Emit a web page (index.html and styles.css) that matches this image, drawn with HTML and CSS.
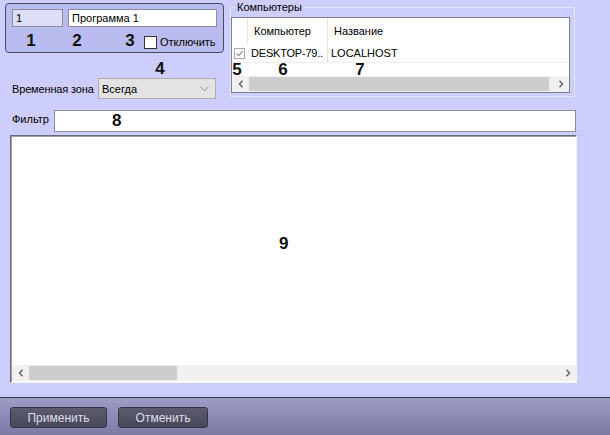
FILE: index.html
```html
<!DOCTYPE html>
<html lang="ru">
<head>
<meta charset="utf-8">
<title>Программа</title>
<link rel="stylesheet" href="styles.css">
</head>
<body>
<div class="app">
  <div class="top">
    <div class="leftcol">
      <div class="idbox">
        <div class="fields">
          <div class="field f-id">1</div>
          <div class="field f-name">Программа 1</div>
        </div>
        <div class="nums">
          <span class="num n1">1</span>
          <span class="num n2">2</span>
          <span class="num n3">3</span>
          <span class="chk"></span>
          <span class="chk-label">Отключить</span>
        </div>
      </div>
      <div class="num n4">4</div>
      <div class="zone">
        <span class="zone-label">Временная зона</span>
        <div class="combo">
          <span>Всегда</span>
          <svg class="combo-arrow" width="9" height="6" viewBox="0 0 9 6"><path d="M0.5 0.8 L4.5 4.8 L8.5 0.8" fill="none" stroke="#8a8a8a" stroke-width="1"/></svg>
        </div>
      </div>
    </div>
    <fieldset class="comps">
      <legend>Компьютеры</legend>
      <div class="lv">
        <div class="lv-head">
          <span class="c0"></span>
          <span class="c1">Компьютер</span>
          <span class="c2">Название</span>
        </div>
        <div class="lv-row">
          <span class="c0"><span class="lv-chk"><svg width="9" height="9" viewBox="0 0 9 9"><path d="M1.5 4.5 L3.7 6.7 L7.8 1.8" fill="none" stroke="#8c8c8c" stroke-width="1.2"/></svg></span></span>
          <span class="c1 cell">DESKTOP-79..</span>
          <span class="c2 cell">LOCALHOST</span>
        </div>
        <div class="lv-nums">
          <span class="num s5">5</span>
          <span class="num s6">6</span>
          <span class="num s7">7</span>
        </div>
        <div class="hscroll">
          <span class="arrow"><svg width="6" height="8" viewBox="0 0 6 8"><path d="M4.5 0.8 L1.5 4 L4.5 7.2" fill="none" stroke="#606060" stroke-width="1.4"/></svg></span>
          <span class="thumb thumb-small"></span>
          <span class="track"></span>
          <span class="arrow"><svg width="6" height="8" viewBox="0 0 6 8"><path d="M1.5 0.8 L4.5 4 L1.5 7.2" fill="none" stroke="#606060" stroke-width="1.4"/></svg></span>
        </div>
      </div>
    </fieldset>
  </div>

  <div class="filter">
    <span class="filter-label">Фильтр</span>
    <div class="filter-input"><span class="num n8">8</span></div>
  </div>

  <div class="biglist">
    <div class="area"><span class="num n9">9</span></div>
    <div class="hscroll big">
      <span class="arrow"><svg width="6" height="8" viewBox="0 0 6 8"><path d="M4.5 0.8 L1.5 4 L4.5 7.2" fill="none" stroke="#606060" stroke-width="1.4"/></svg></span>
      <span class="thumb thumb-big"></span>
      <span class="track"></span>
      <span class="arrow"><svg width="6" height="8" viewBox="0 0 6 8"><path d="M1.5 0.8 L4.5 4 L1.5 7.2" fill="none" stroke="#606060" stroke-width="1.4"/></svg></span>
    </div>
  </div>

  <div class="footer">
    <button class="btn btn-apply">Применить</button>
    <button class="btn btn-cancel">Отменить</button>
  </div>
</div>
</body>
</html>
```

FILE: styles.css
```css
* { box-sizing: border-box; }
html, body {
  margin: 0;
  padding: 0;
}
body {
  background: #cdcefc;
  font-family: "Liberation Sans", Arial, sans-serif;
  font-size: 11px;
  color: #000;
}
.app {
  width: 610px;
  height: 435px;
  display: flex;
  flex-direction: column;
  overflow: hidden;
}

.num {
  font-family: "Liberation Sans", Arial, sans-serif;
  font-weight: bold;
  font-size: 17px;
  line-height: 18px;
  color: #111;
}

/* top */
.top {
  display: flex;
  align-items: flex-start;
}
.leftcol {
  width: 219px;
  margin-left: 5px;
  margin-top: 3px;
}
.idbox {
  height: 50px;
  border: 1px solid #4a4a5a;
  border-radius: 4px;
  background: #babcef;
  padding: 5px 0 0 6px;
}
.fields {
  display: flex;
  gap: 5px;
}
.field {
  height: 18px;
  border: 1px solid #8c8ca0;
  line-height: 16px;
  padding-left: 3px;
  font-size: 11px;
}
.f-id {
  width: 51px;
  background: #dedef8;
}
.f-name {
  width: 149px;
  background: #fff;
}
.nums {
  display: flex;
  align-items: center;
  margin-top: 5px;
  height: 18px;
}
.nums .num {
  width: 10px;
  text-align: center;
}
.n1 { margin-left: 14px; }
.n2 { margin-left: 36px; }
.n3 { margin-left: 43px; }
.chk {
  width: 13px;
  height: 13px;
  border: 1px solid #333;
  background: #fff;
  margin-left: 9px;
  margin-top: 2px;
}
.chk-label {
  margin-left: 3px;
  margin-top: 2px;
  font-size: 11px;
}
.n4 {
  margin-top: 7px;
  margin-left: 145px;
  width: 20px;
  text-align: center;
}
.zone {
  display: flex;
  align-items: center;
  padding-left: 7px;
}
.zone-label {
  width: 86px;
  flex: none;
  font-size: 11px;
  letter-spacing: -0.15px;
  white-space: nowrap;
}
.combo {
  width: 118px;
  height: 21px;
  border: 1px solid #adadad;
  background: #e3e3e3;
  display: flex;
  align-items: center;
  justify-content: space-between;
  padding: 0 6px 0 3px;
  font-size: 11px;
}

/* computers */
.comps {
  margin: 1px 0 0 6px;
  padding: 0 4px 3px 0;
  width: 345px;
  border: 1px solid #e6e6fb;
  min-width: 0;
}
.comps legend {
  padding: 0 2px;
  margin-left: 4px;
  line-height: 12px;
  font-size: 11px;
}
.lv {
  margin-top: 4px;
  width: 339px;
  height: 76px;
  border: 1px solid #7c7c8c;
  background: #fff;
  display: flex;
  flex-direction: column;
}
.lv-head {
  height: 26px;
  display: flex;
  flex: none;
}
.lv-head span, .lv-row > span {
  display: flex;
  align-items: center;
}
.c0 {
  width: 16px;
  border-right: 1px solid #e6e6e6;
  flex: none;
}
.c1 {
  width: 80px;
  padding-left: 6px;
  border-right: 1px solid #e6e6e6;
  flex: none;
  white-space: nowrap;
}
.c2 {
  flex: 1;
  padding-left: 6px;
}
.lv-row {
  height: 19px;
  display: flex;
  flex: none;
  border-bottom: 1px solid #ececec;
}
.lv-row .c0 {
  border-right: none;
  padding-left: 2px;
}
.lv-row .c1 {
  padding-left: 3px;
  letter-spacing: -0.2px;
}
.lv-row .c2 {
  padding-left: 3px;
}
.lv-row .cell {
  font-size: 11px;
}
.lv-chk {
  width: 11px;
  height: 11px;
  border: 1px solid #a8a8a8;
  background: #fff;
  display: flex;
  align-items: center;
  justify-content: center;
}
.lv-nums {
  height: 13px;
  flex: none;
  display: flex;
}
.lv-nums .num {
  line-height: 13px;
  width: 10px;
  text-align: center;
}
.s5 { margin-left: 0; }
.s6 { margin-left: 36px; }
.s7 { margin-left: 67px; }

.hscroll {
  height: 16px;
  flex: none;
  background: #f0f0f0;
  display: flex;
  align-items: stretch;
}
.hscroll .arrow {
  width: 17px;
  flex: none;
  display: flex;
  align-items: center;
  justify-content: center;
}
.thumb {
  background: #cdcdcd;
  margin: 1px 0;
  flex: none;
}
.thumb-small { width: 300px; }
.thumb-big { width: 148px; }
.track { flex: 1; }

/* filter */
.filter {
  display: flex;
  align-items: flex-start;
  margin-top: 11px;
  padding-left: 12px;
}
.filter-label {
  width: 42px;
  flex: none;
  font-size: 11px;
  line-height: 18px;
}
.filter-input {
  width: 522px;
  height: 22px;
  border: 1px solid #8c8c9c;
  background: #fff;
  padding-left: 57px;
  line-height: 20px;
}
.n8 { line-height: 20px; }

/* big list */
.biglist {
  margin: 3px 0 0 10px;
  width: 567px;
  height: 248px;
  border-top: 1px solid #6a6a78;
  border-left: 1px solid #6a6a78;
  border-right: 1px solid #f4f4f4;
  border-bottom: 1px solid #f4f4f4;
  box-shadow: inset 1px 1px 0 #a0a0a0;
  background: #fff;
  display: flex;
  flex-direction: column;
}
.area {
  flex: 1;
  padding: 99px 0 0 268px;
}
.hscroll.big {
  margin: 0 0 1px 1px;
}

/* footer */
.footer {
  margin-top: 14px;
  flex: 1;
  border-top: 1px solid #33334a;
  background: linear-gradient(#9c9cc6, #7a7aa4);
  display: flex;
  align-items: flex-start;
  padding: 9px 0 0 10px;
  gap: 11px;
}
.btn {
  height: 21px;
  border: 1px solid #34344a;
  border-radius: 3px;
  background: linear-gradient(#5c5c6e, #47475a);
  color: #dedeea;
  font-family: "Liberation Sans", Arial, sans-serif;
  font-size: 12px;
  padding: 0;
}
.btn-apply { width: 97px; }
.btn-cancel { width: 90px; }
```
